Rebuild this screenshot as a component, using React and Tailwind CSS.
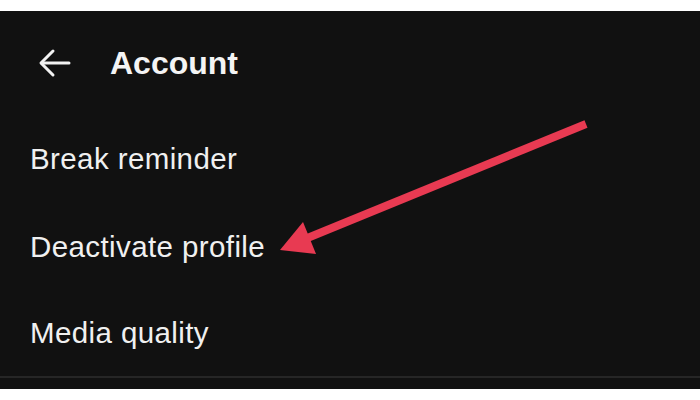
export default function App() {
  return (
    <div className="w-[700px] h-[400px] bg-white relative overflow-hidden" style={{ fontFamily: '"Liberation Sans", Arial, sans-serif' }}>
      <div className="mt-[11px] h-[378px] bg-[#111111] flex flex-col">
        <div className="h-[104px] flex items-center pl-[38px]">
          <svg width="34" height="30" viewBox="0 0 34 30" fill="none" stroke="#f2f2f2" strokeWidth="3" strokeLinecap="round" strokeLinejoin="round">
            <path d="M31 15H4" />
            <path d="M15 3L3 15l12 12" />
          </svg>
          <span className="ml-[38px] text-[32px] font-bold text-[#f4f4f4]">Account</span>
        </div>
        <div className="h-[88px] flex items-center pl-[30px] text-[29.5px] tracking-[0.4px] text-[#f0f0f0]">Break reminder</div>
        <div className="h-[88px] flex items-center pl-[30px] text-[29.5px] tracking-[0.4px] text-[#f0f0f0]">Deactivate profile</div>
        <div className="h-[85px] flex items-center pl-[30px] text-[29.5px] tracking-[0.4px] text-[#f0f0f0]">Media quality</div>
        <div className="h-[2px] bg-[#262626]"></div>
      </div>
      <svg className="absolute left-0 top-0" width="700" height="400" viewBox="0 0 700 400">
        <line x1="586" y1="124" x2="305" y2="239" stroke="#e83a52" strokeWidth="8" />
        <polygon points="280,250 303,222 316,254" fill="#e83a52" />
      </svg>
    </div>
  );
}
